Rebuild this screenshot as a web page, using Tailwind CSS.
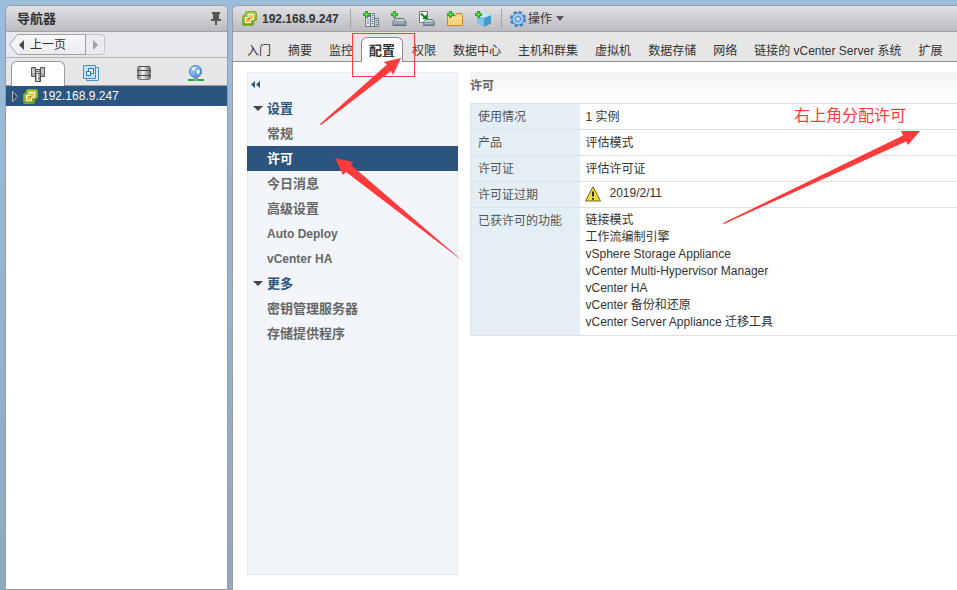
<!DOCTYPE html>
<html lang="zh-CN">
<head>
  <meta charset="UTF-8">
  <meta name="viewport" content="width=device-width, initial-scale=1.0">
  <title>vSphere Web Client</title>
  <script src="https://cdn.jsdelivr.net/npm/@tailwindcss/browser@4"></script>
</head>
<body class="relative flex min-h-screen gap-1 overflow-x-hidden bg-linear-to-b from-[#9bbddc] to-[#8fa9bf] pt-[5px] pl-[5px] font-['Liberation_Sans','Noto_Sans_CJK_SC',sans-serif] text-xs text-[#333]">

  <!-- shared icons -->
  <svg class="absolute h-0 w-0">
    <defs>
      <linearGradient id="globe" x1="0" y1="0" x2="1" y2="1"><stop offset="0" stop-color="#b8dcff"/><stop offset="1" stop-color="#3a7fd0"/></linearGradient>
      <linearGradient id="metal" x1="0" y1="0" x2="1" y2="0"><stop offset="0" stop-color="#777"/><stop offset=".4" stop-color="#f4f4f4"/><stop offset="1" stop-color="#666"/></linearGradient>
      <linearGradient id="leaf" x1="0" y1="0" x2="0" y2="1"><stop offset="0" stop-color="#a5cf4c"/><stop offset="1" stop-color="#6f9f22"/></linearGradient>
    </defs>
    <symbol id="vcenter" viewBox="0 0 16 16">
      <path d="M5.500 .5h8q2 0 2 2v6q0 2-2 2h-1v3q0 2-2 2h-8q-2 0-2-2v-7q0-2 2-2h1v-2q0-2 2-2z" fill="url(#leaf)" stroke="#7da52f"/>
      <path d="M6.500 3.500h6v5.500h-6z" fill="#f8c63c" stroke="#fff"/>
      <path d="M3.500 7h5.500v5.500h-5.500z" fill="#f8b93c" stroke="#fff"/>
      <path d="M7 7h2v2h-2z" fill="#5f8020"/>
    </symbol>
    <symbol id="plus" viewBox="0 0 7 7">
      <path d="M2.500 .5h2v2h2v2h-2v2h-2v-2h-2v-2h2z" fill="#5dea3c" stroke="#189c1c"/>
    </symbol>
    <symbol id="disk" viewBox="0 0 14 8">
      <path d="M3 .5h8l2.500 3v4h-13v-4z" fill="#c5ccd3" stroke="#5f6d7b"/>
      <path d="M1 3.500h12v3.500h-12z" fill="#7e8b98"/>
      <path d="M2 5h1m1 0h1m1 0h1m1 0h1m1 0h1" stroke="#fff"/>
    </symbol>
  </svg>

  <aside class="flex w-[223px] shrink-0 flex-col overflow-hidden rounded-t-md border border-[#9a9a9e] bg-white">
    <header class="flex h-[26px] shrink-0 items-center justify-between border-b border-[#a2a2a6] bg-linear-to-b from-[#e0e0e5] to-[#bcbcc1] pr-[6px] pl-[11px]">
      <h2 class="text-[13px] font-bold">导航器</h2>
      <button aria-label="固定">
        <svg class="h-[14px] w-[10px]" viewBox="0 0 10 14"><path d="M1 0h8v2h-1v5h2v2h-4v4h-2v-4h-4v-2h2v-5h-1z" fill="#555"/></svg>
      </button>
    </header>
    <div class="flex h-[26px] shrink-0 items-center border-b border-[#b0b0b4] bg-[#e8e9ee] pl-[3px]">
      <button class="flex h-[21px] items-center">
        <svg class="h-[21px] w-[10px]" viewBox="0 0 10 21"><path d="M10 .5H8.500L.5 10.500l8 10H10" fill="#f5f5f7" stroke="#a0a0a4"/></svg>
        <span class="flex h-[21px] w-[67px] items-center gap-[6px] border-y border-r border-[#a0a0a4] bg-linear-to-b from-[#f8f8fa] to-[#ececf0] pt-px">
          <svg class="h-[10px] w-[5px]" viewBox="0 0 5 10"><path d="M5 0v10L0 5z" fill="#4a4a4a"/></svg>
          上一页
        </span>
      </button>
      <button aria-label="下一页" class="flex h-[21px] w-[19px] items-center justify-center rounded-r border border-l-0 border-[#c4c4c8] bg-[#ececf0]">
        <svg class="h-[10px] w-[5px]" viewBox="0 0 5 10"><path d="M0 0v10l5-5z" fill="#a2a2a6"/></svg>
      </button>
    </div>
    <div role="tablist" class="flex h-7 shrink-0 items-end border-b border-[#9a9a9e] bg-[#e6e6e8] px-[5px]">
      <button role="tab" aria-label="主机" class="-mb-px flex h-[25px] flex-1 items-center justify-center rounded-t-md border border-b-0 border-[#9a9a9e] bg-white">
        <svg class="h-4 w-4" viewBox="0 0 16 16">
          <path d="M1.500 1.500h4v9h-4zM10.500 1.500h4v9h-4z" fill="#aaa" stroke="#5c5c5c"/>
          <path d="M2 4h3m6 0h3M2 6h3m6 0h3" stroke="#e8e8e8"/>
          <path d="M5.500 3.500h5v12h-5z" fill="url(#metal)" stroke="#4c4c4c"/>
          <path d="M6.500 5.500h3m-3 2h3" stroke="#666"/><path d="M8 12h1v1h-1z" fill="#333"/>
        </svg>
      </button>
      <button role="tab" aria-label="虚拟机" class="flex h-[25px] flex-1 items-center justify-center">
        <svg class="h-4 w-4" viewBox="0 0 16 16">
          <path d="M3.500 2.500h12v13h-12z" fill="#d5ebfa" stroke="#4b8fc4"/>
          <path d="M.5 .5h12v13h-12z" fill="#c4e3f8" stroke="#4b8fc4"/>
          <path d="M5.500 3.500h5v5h-5z" fill="#fff" stroke="#1f78b8"/><path d="M3.500 6.500h4v4h-4z" fill="#e8f5ff" stroke="#1f78b8"/>
        </svg>
      </button>
      <button role="tab" aria-label="存储" class="flex h-[25px] flex-1 items-center justify-center">
        <svg class="h-[14px] w-[14px]" viewBox="0 0 14 14">
          <rect x=".5" y=".5" width="13" height="13" rx="2" fill="url(#metal)" stroke="#777"/>
          <path d="M0 4.500h14M0 9.500h14" stroke="#444"/><path d="M1 .5h12" stroke="#555"/>
        </svg>
      </button>
      <button role="tab" aria-label="网络" class="flex h-[25px] flex-1 items-center justify-center">
        <svg class="h-4 w-4" viewBox="0 0 16 16">
          <circle cx="7.500" cy="6.500" r="6" fill="url(#globe)" stroke="#3d7cc4"/>
          <path d="M4 3q3-2 4 0l-2 3q-2 0-2-3zM8 6l3-2 1 3-2 3z" fill="#e2f2ff"/>
          <path d="M7 12h2v2h-2z" fill="#888"/><path d="M0 14h16v2H0z" fill="#10b52a"/><path d="M6 13h4v3H6z" fill="#8c979f"/>
        </svg>
      </button>
    </div>
    <a href="#" class="flex h-5 shrink-0 items-center bg-[#2b547e] pl-[6px] text-white">
      <svg class="mr-[5px] h-[11px] w-[6px]" viewBox="0 0 6 11"><path d="M.5 .5v10l5-5z" fill="#35475c" stroke="#b0b8c0"/></svg>
      <svg class="mr-1 h-[15px] w-[15px]"><use href="#vcenter"/></svg>
      192.168.9.247
    </a>
  </aside>

  <main class="flex min-w-0 flex-1 flex-col overflow-hidden rounded-tl-md border-t border-l border-[#9a9a9e] bg-white">
    <header class="flex h-[26px] shrink-0 items-center border-b border-[#a2a2a6] bg-linear-to-b from-[#e0e0e5] to-[#bcbcc1] pl-[9px]">
      <svg class="mr-[5px] h-[15px] w-[15px]"><use href="#vcenter"/></svg>
      <h1 class="w-[88px] font-bold">192.168.9.247</h1>
      <div class="flex h-5 items-center gap-3 border-x border-[#a6a6aa] px-[10px]">
        <button aria-label="新建数据中心" class="ml-[2px]">
          <svg class="h-4 w-4" viewBox="0 0 16 16">
            <path d="M2.500 5.500h5v10h-5z" fill="#e4e8ec" stroke="#6c7a88"/><path d="M7.500 2.500h4v13h-4z" fill="#dfe4e8" stroke="#6c7a88"/><path d="M11.500 7.500h4v8h-4z" fill="#cfd5db" stroke="#6c7a88"/>
            <path d="M5 8v6M9.500 4v10M13.500 9v5" stroke="#5d6b78" stroke-width="1.500" stroke-dasharray="1 1"/>
            <use href="#plus" x="0" y="0" width="7" height="7"/>
          </svg>
        </button>
        <button aria-label="添加主机">
          <svg class="h-4 w-4" viewBox="0 0 16 16"><use href="#disk" x="1" y="7" width="15" height="8"/><use href="#plus" x="0" y="0" width="7" height="7"/></svg>
        </button>
        <button aria-label="导入主机">
          <svg class="h-4 w-4" viewBox="0 0 16 16">
            <path d="M.5 .5h8v11h-8z" fill="#fff" stroke="#777"/>
            <use href="#disk" x="4" y="8" width="12" height="7"/>
            <path d="M2 2.500l4 4" stroke="#12852a" stroke-width="2"/><path d="M8 3v5H3z" fill="#12852a"/>
          </svg>
        </button>
        <button aria-label="新建文件夹">
          <svg class="h-4 w-4" viewBox="0 0 16 16">
            <path d="M.5 14.500v-10h8l1-2h5l1 2v10z" fill="#fbd27c" stroke="#c18a2c"/><path d="M1 7h14" stroke="#fff0c4"/>
            <use href="#plus" x="0" y="0" width="7" height="7"/>
          </svg>
        </button>
        <button aria-label="新建群集">
          <svg class="h-4 w-4" viewBox="0 0 16 16">
            <path d="M2 4l7-2.500L16 4l-7 3z" fill="#c5e8f9"/><path d="M2 4l7 3v9l-7-3.500z" fill="#7cc4ea"/><path d="M16 4l-7 3v9l7-3.500z" fill="#459ccf"/>
            <use href="#plus" x="0" y="0" width="7" height="7"/>
          </svg>
        </button>
      </div>
      <button class="flex items-center pl-2">
        <svg class="mr-[2px] h-4 w-4" viewBox="0 0 16 16">
          <circle cx="8" cy="8" r="6.500" fill="none" stroke="#3b76c2" stroke-width="3" stroke-dasharray="2.900 2.205"/>
          <circle cx="8" cy="8" r="6" fill="#9bcaf8" stroke="#4a86d0"/>
          <circle cx="8" cy="8" r="2.500" fill="#dcdce0" stroke="#3f7cc8"/>
        </svg>
        操作
        <svg class="ml-1 h-[5px] w-2" viewBox="0 0 8 5"><path d="M0 0h8L4 5z" fill="#555"/></svg>
      </button>
    </header>

    <nav class="flex h-[30px] shrink-0 items-end gap-px border-b border-[#8e8e92] bg-[#e6e6e6] pl-[6px] whitespace-nowrap">
      <a href="#" class="flex h-[21px] items-center px-2">入门</a>
      <a href="#" class="flex h-[21px] items-center px-2">摘要</a>
      <a href="#" class="flex h-[21px] items-center px-2">监控</a>
      <a href="#" class="-mb-px -ml-px flex h-[25px] items-center rounded-t-md border border-b-0 border-[#8e8e92] bg-white px-[7px] pt-[2px] text-[13px] font-bold">配置</a>
      <a href="#" class="flex h-[21px] items-center px-2">权限</a>
      <a href="#" class="flex h-[21px] items-center px-2">数据中心</a>
      <a href="#" class="flex h-[21px] items-center px-2">主机和群集</a>
      <a href="#" class="flex h-[21px] items-center px-2">虚拟机</a>
      <a href="#" class="flex h-[21px] items-center px-2">数据存储</a>
      <a href="#" class="flex h-[21px] items-center px-2">网络</a>
      <a href="#" class="flex h-[21px] items-center px-2">链接的 vCenter Server 系统</a>
      <a href="#" class="flex h-[21px] items-center px-2">扩展</a>
    </nav>

    <div class="flex flex-1 gap-3 pt-[10px] pb-[15px] pl-[14px]">
      <div class="w-[211px] shrink-0 border border-[#e4eaf3] bg-[#f2f6fb] text-[#666]">
        <button aria-label="折叠" class="flex h-[23px] items-center pl-[3px]">
          <svg class="h-[7px] w-[9px]" viewBox="0 0 9 7"><path d="M4 0v7L0 3.500zM9 0v7L5 3.500z" fill="#2b547e"/></svg>
        </button>
        <button class="flex h-[25px] items-center gap-1 pl-[5px] text-[13px] font-bold text-[#2b547e]">
          <svg class="h-[5px] w-[10px]" viewBox="0 0 10 5"><path d="M0 0h10L5 5z" fill="#444"/></svg>设置
        </button>
        <ul class="font-bold">
          <li><a href="#" class="flex h-[25px] items-center pl-[19px] text-[13px]">常规</a></li>
          <li><a href="#" class="-mx-px flex h-[25px] items-center bg-[#2b547e] pl-5 text-[13px] text-white">许可</a></li>
          <li><a href="#" class="flex h-[25px] items-center pl-[19px] text-[13px]">今日消息</a></li>
          <li><a href="#" class="flex h-[25px] items-center pl-[19px] text-[13px]">高级设置</a></li>
          <li><a href="#" class="flex h-[25px] items-center pl-[19px]">Auto Deploy</a></li>
          <li><a href="#" class="flex h-[25px] items-center pl-[19px]">vCenter HA</a></li>
        </ul>
        <button class="flex h-[25px] items-center gap-1 pl-[5px] text-[13px] font-bold text-[#2b547e]">
          <svg class="h-[5px] w-[10px]" viewBox="0 0 10 5"><path d="M0 0h10L5 5z" fill="#444"/></svg>更多
        </button>
        <ul class="font-bold">
          <li><a href="#" class="flex h-[25px] items-center pl-[19px] text-[13px]">密钥管理服务器</a></li>
          <li><a href="#" class="flex h-[25px] items-center pl-[19px] text-[13px]">存储提供程序</a></li>
        </ul>
      </div>

      <section class="min-w-0 flex-1">
        <h2 class="flex h-[31px] items-center bg-linear-to-b from-[#f3f3f3] to-white pb-1 font-bold text-[#666]">许可</h2>
        <table class="w-full border-b border-l border-[#e0e0e0] text-left leading-[17px]">
          <tbody>
            <tr class="border-t border-[#e0e0e0]">
              <th class="w-[109px] bg-[#e3eff5] px-[7px] pt-[5px] pb-[3px] align-top font-normal text-[#555]">使用情况</th>
              <td class="px-[6px] pt-[5px] pb-[3px]">1 实例</td>
            </tr>
            <tr class="border-t border-[#e0e0e0]">
              <th class="bg-[#e3eff5] px-[7px] pt-[5px] pb-[3px] align-top font-normal text-[#555]">产品</th>
              <td class="px-[6px] pt-[5px] pb-[3px]">评估模式</td>
            </tr>
            <tr class="border-t border-[#e0e0e0]">
              <th class="bg-[#e3eff5] px-[7px] pt-[5px] pb-[3px] align-top font-normal text-[#555]">许可证</th>
              <td class="px-[6px] pt-[5px] pb-[3px]">评估许可证</td>
            </tr>
            <tr class="border-t border-[#e0e0e0]">
              <th class="bg-[#e3eff5] px-[7px] pt-[5px] pb-[3px] align-top font-normal text-[#555]">许可证过期</th>
              <td class="px-[5px] pt-[3px] pb-[5px]">
                <div class="flex h-[17px] items-center gap-[9px]">
                  <svg class="h-4 w-4" viewBox="0 0 16 16"><path d="M8 .8L15.500 15H.5z" fill="#f4dc35" stroke="#6b6420" stroke-linejoin="round"/><path d="M8 5.500v5M8 12v1.800" stroke="#222" stroke-width="1.800"/></svg>
                  2019/2/11
                </div>
              </td>
            </tr>
            <tr class="border-t border-[#e0e0e0]">
              <th class="bg-[#e3eff5] px-[7px] pt-[5px] pb-[3px] align-top font-normal text-[#555]">已获许可的功能</th>
              <td class="px-[6px] py-1">
                <ul>
                  <li>链接模式</li>
                  <li>工作流编制引擎</li>
                  <li>vSphere Storage Appliance</li>
                  <li>vCenter Multi-Hypervisor Manager</li>
                  <li>vCenter HA</li>
                  <li>vCenter 备份和还原</li>
                  <li>vCenter Server Appliance 迁移工具</li>
                </ul>
              </td>
            </tr>
          </tbody>
        </table>
      </section>
    </div>
  </main>

  <!-- red markup over the console -->
  <svg class="pointer-events-none absolute top-0 left-0 h-[590px] w-[957px]" viewBox="0 0 957 590">
    <rect x="352.500" y="33.500" width="62" height="43" fill="none" stroke="#ff3b3b"/>
    <g fill="#ff3b3b">
      <path d="M320 124L387 64.500L383.500 62L401 58L393 75L391 71L321 125z"/>
      <path d="M335 158L353 162L351 165L464 262L346 172L343 175z"/>
      <path d="M723 223L903 135.500L901 131L920 131L908 145L906 141.500L724 224z"/>
    </g>
  </svg>
  <p class="absolute top-[104px] left-[794px] text-base text-[#ff3b3b]">右上角分配许可</p>
</body>
</html>
